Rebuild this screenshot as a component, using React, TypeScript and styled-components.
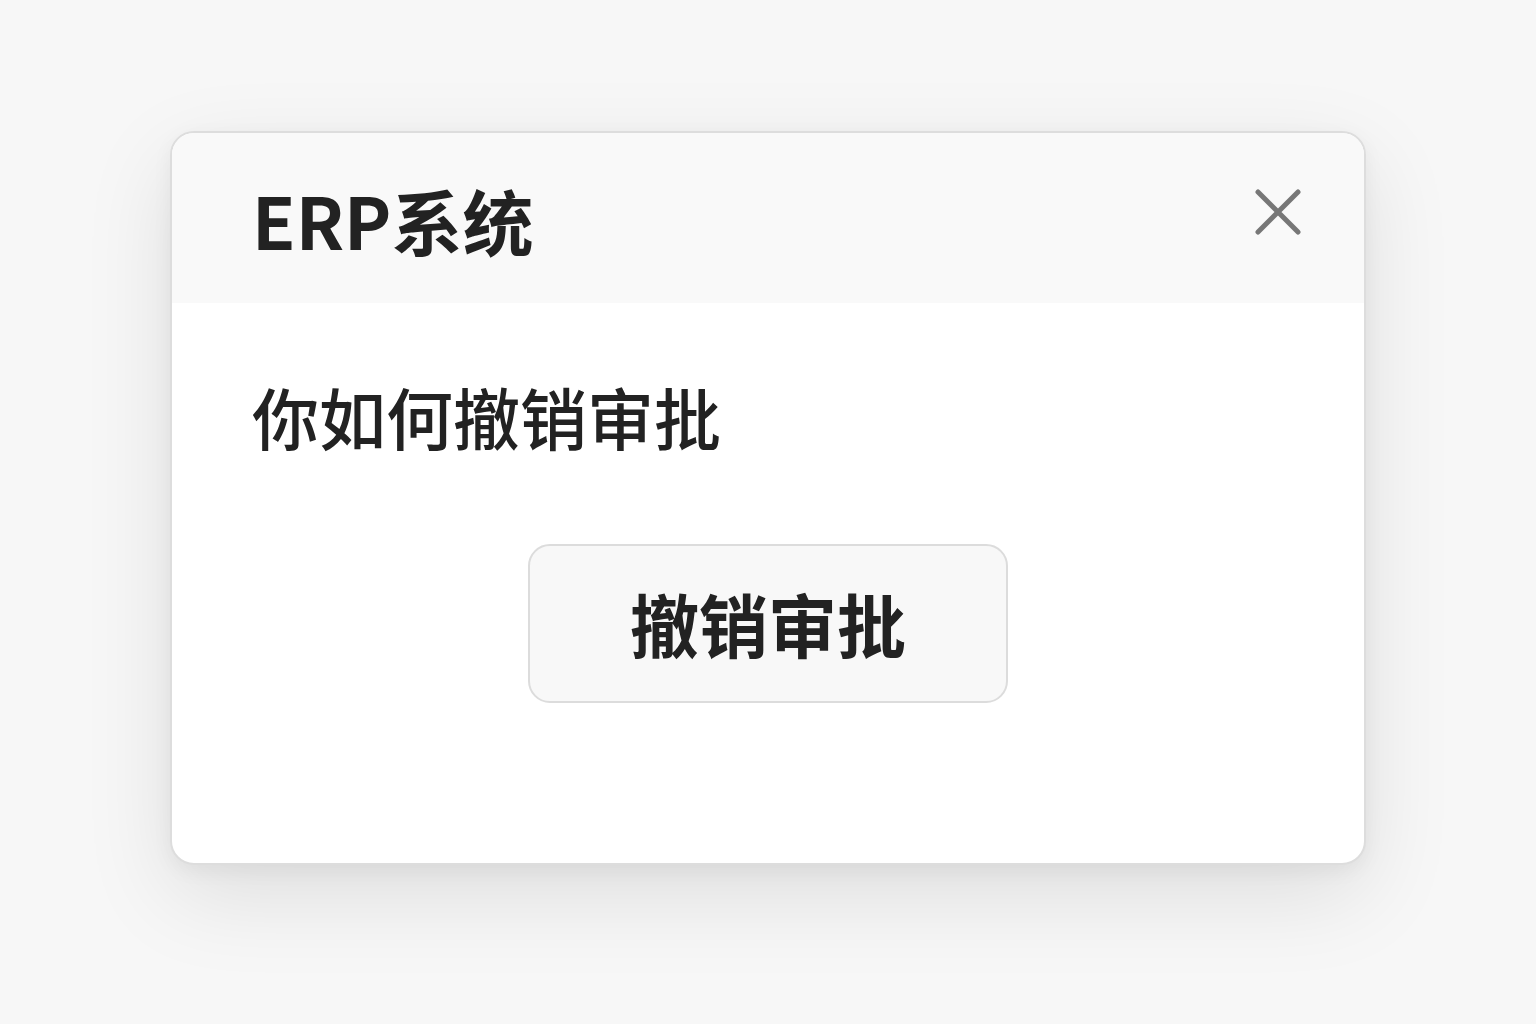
import styled, { createGlobalStyle } from "styled-components";

const GlobalStyle = createGlobalStyle`
    html, body {
        margin: 0;
        padding: 0;
        background: #f7f7f7;
        font-family: "Noto Sans CJK SC", "Noto Sans", sans-serif;
        color: #222;
    }
`;

const Page = styled.div`
    width: 1536px;
    height: 1024px;
    display: flex;
    justify-content: center;
    align-items: flex-start;
    padding-top: 131px;
    box-sizing: border-box;
`;

const Dialog = styled.div`
    width: 1196px;
    height: 734px;
    box-sizing: border-box;
    background: #fff;
    border: 2px solid #dddddd;
    border-radius: 24px;
    overflow: hidden;
    box-shadow: 0 30px 90px rgba(0, 0, 0, 0.1), 0 6px 20px rgba(0, 0, 0, 0.05);
    display: flex;
    flex-direction: column;
`;

const Header = styled.div`
    height: 170px;
    flex-shrink: 0;
    background: #f9f9f9;
    display: flex;
    align-items: center;
    justify-content: space-between;
    padding: 0 62px 0 80px;
`;

const Title = styled.h1`
    margin: 0;
    font-size: 71px;
    font-weight: 700;
    line-height: 1;
    color: #222;
    letter-spacing: 0;
    margin-top: 2px;
`;

const CloseButton = styled.button`
    width: 48px;
    height: 48px;
    padding: 0;
    border: none;
    background: transparent;
    display: flex;
    align-items: center;
    justify-content: center;
    cursor: pointer;
    margin-top: -12px;
`;

const Body = styled.div`
    flex: 1;
    display: flex;
    flex-direction: column;
    padding: 73px 80px 0;
`;

const Question = styled.p`
    margin: 0;
    font-size: 67px;
    font-weight: 500;
    line-height: 80px;
    color: #222;
`;

const ActionRow = styled.div`
    display: flex;
    justify-content: center;
    margin-top: 88px;
`;

const ActionButton = styled.button`
    width: 480px;
    height: 159px;
    box-sizing: border-box;
    background: #f8f8f8;
    border: 2px solid #dcdcdc;
    border-radius: 22px;
    font-family: "Noto Sans CJK SC", "Noto Sans", sans-serif;
    font-size: 69px;
    font-weight: 700;
    color: #222;
    cursor: pointer;
    padding: 0 0 2px;
`;

function App() {
    return (
        <>
            <GlobalStyle />
            <Page>
                <Dialog>
                    <Header>
                        <Title>ERP系统</Title>
                        <CloseButton aria-label="关闭">
                            <svg width="48" height="48" viewBox="0 0 48 48">
                                <path
                                    d="M4 4 L44 44 M44 4 L4 44"
                                    stroke="#777"
                                    strokeWidth="5"
                                    strokeLinecap="round"
                                />
                            </svg>
                        </CloseButton>
                    </Header>
                    <Body>
                        <Question>你如何撤销审批</Question>
                        <ActionRow>
                            <ActionButton>撤销审批</ActionButton>
                        </ActionRow>
                    </Body>
                </Dialog>
            </Page>
        </>
    );
}

export default App;
